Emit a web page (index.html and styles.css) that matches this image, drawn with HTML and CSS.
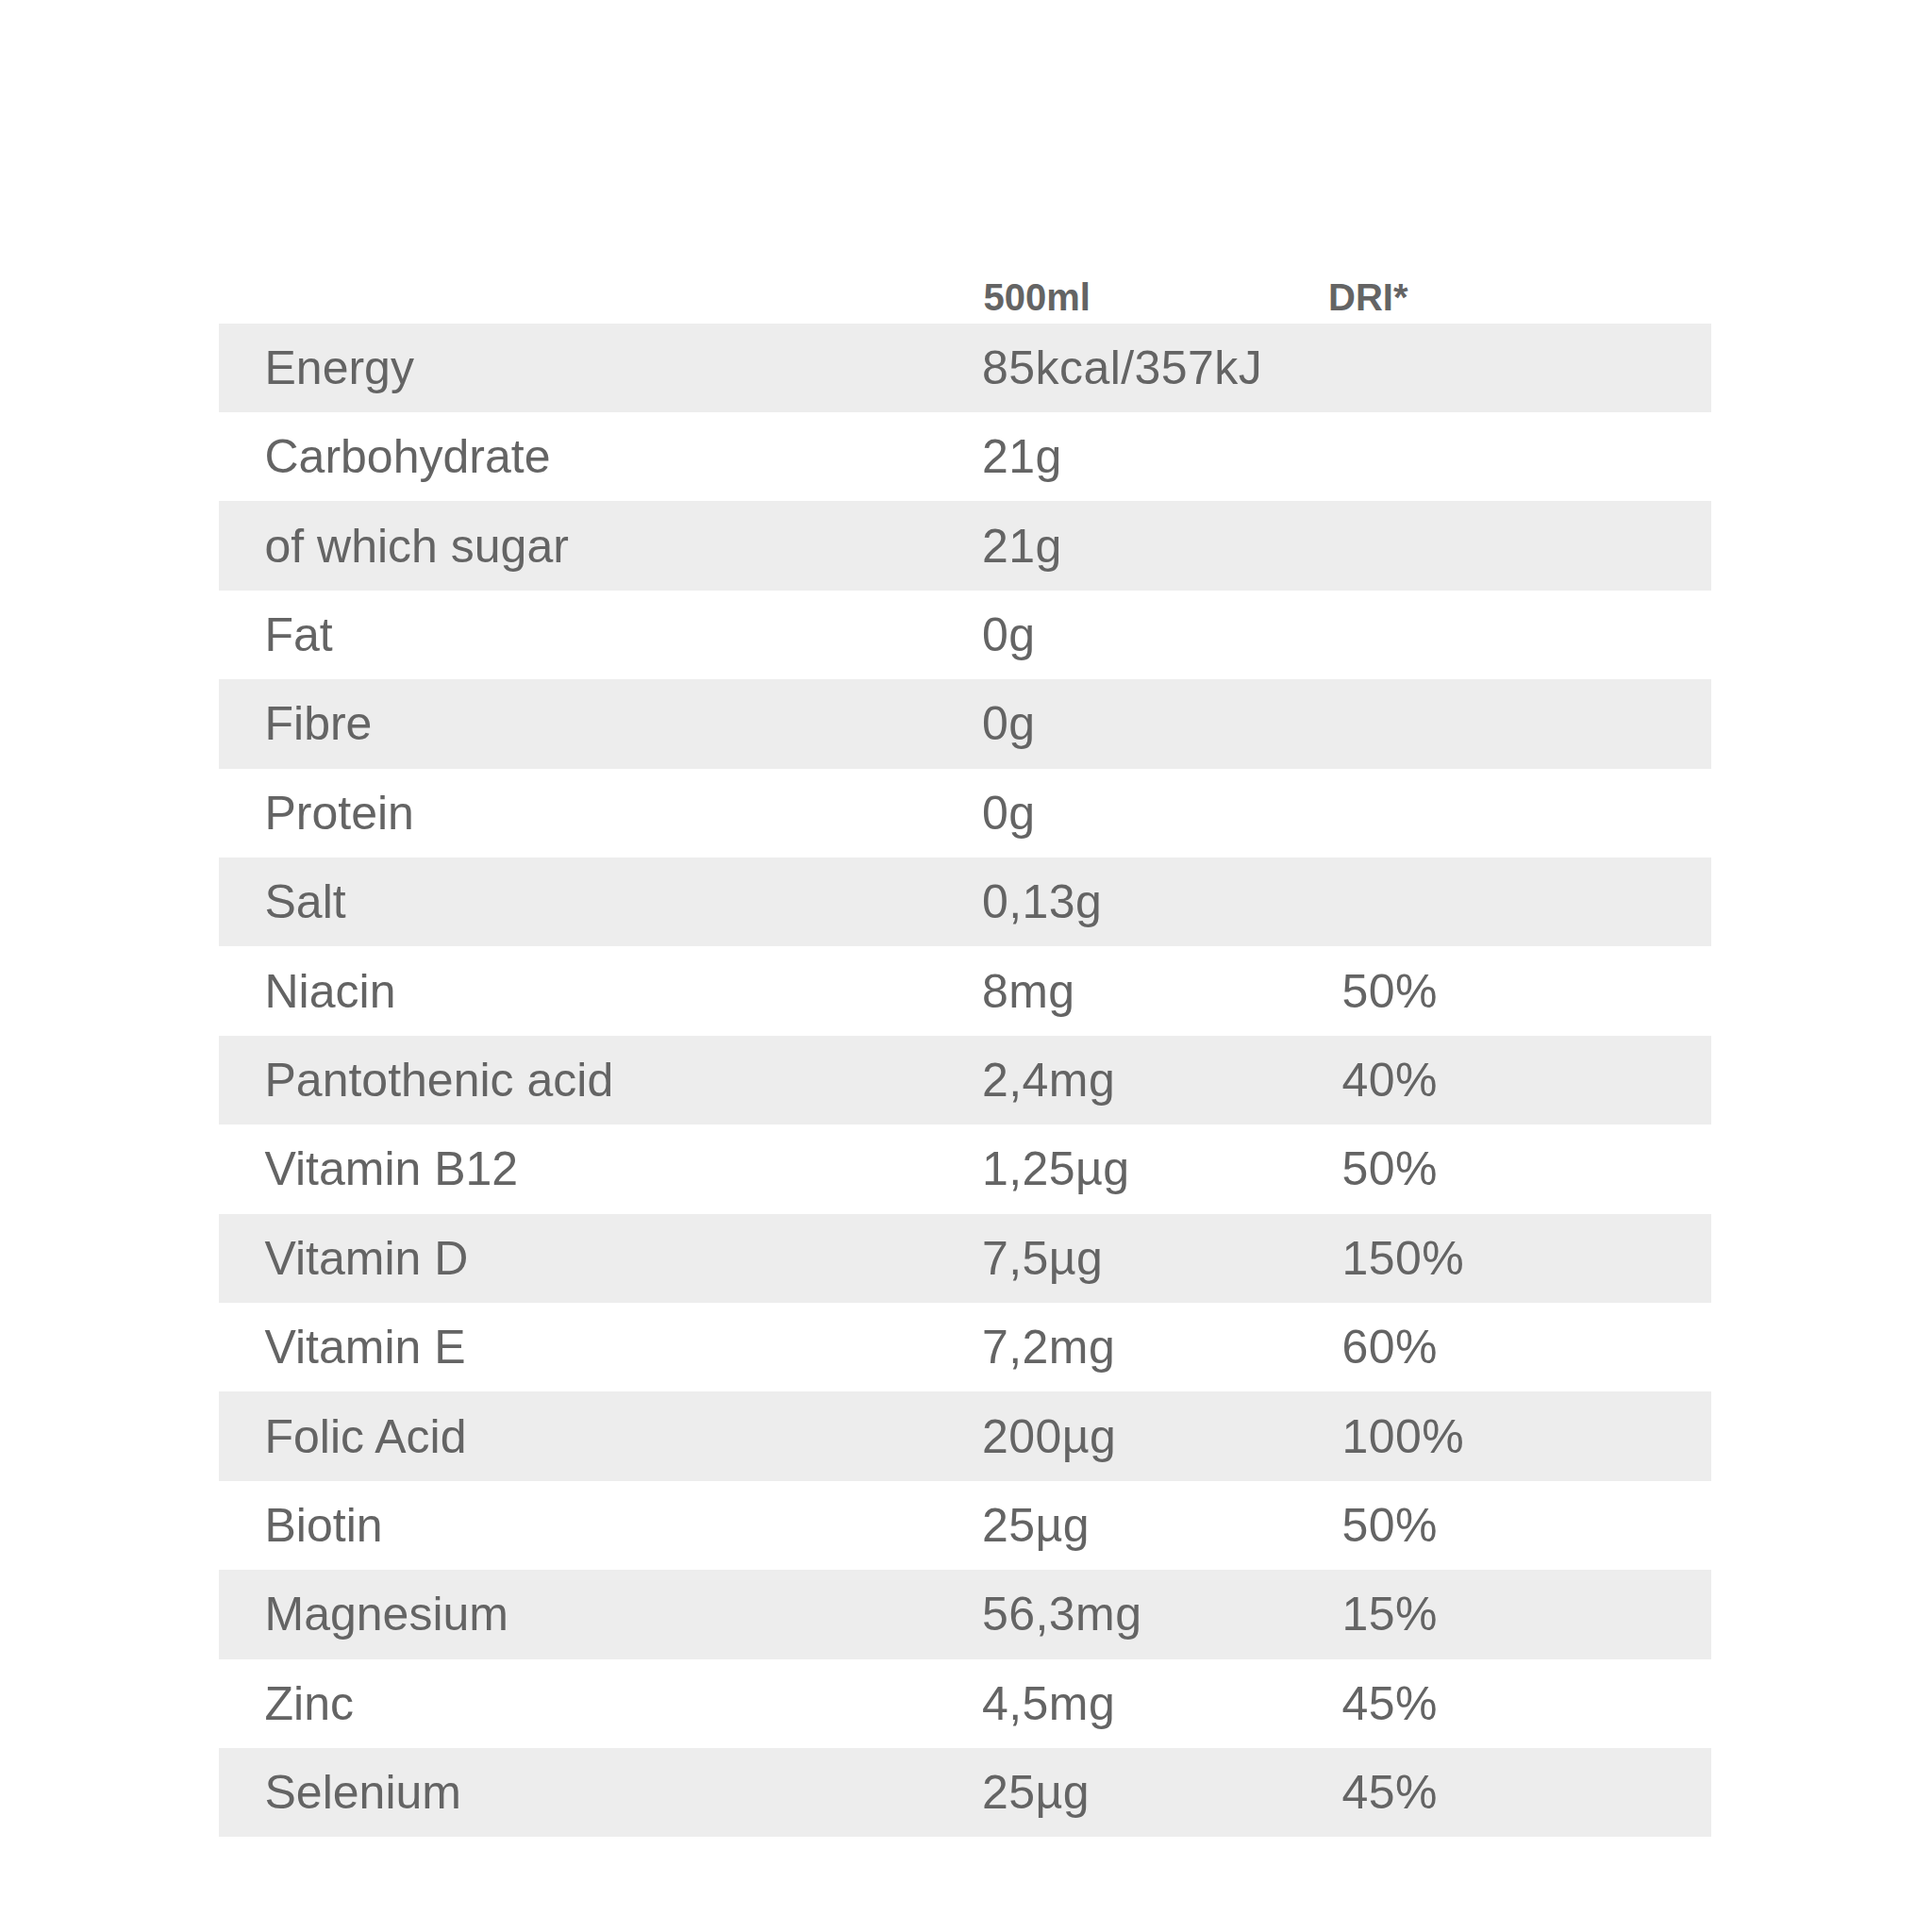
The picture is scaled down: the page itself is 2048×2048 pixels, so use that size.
FILE: index.html
```html
<!DOCTYPE html>
<html lang="en">
<head>
<meta charset="utf-8">
<title>Nutrition</title>
<link rel="stylesheet" href="styles.css">
</head>
<body>
<div class="table">
  <div class="row head">
    <div class="cell name"></div>
    <div class="cell val">500ml</div>
    <div class="cell dri dri-head">DRI*</div>
  </div>
  <div class="row alt"><div class="cell name">Energy</div><div class="cell val">85kcal/357kJ</div><div class="cell dri"></div></div>
  <div class="row"><div class="cell name">Carbohydrate</div><div class="cell val">21g</div><div class="cell dri"></div></div>
  <div class="row alt"><div class="cell name">of which sugar</div><div class="cell val">21g</div><div class="cell dri"></div></div>
  <div class="row"><div class="cell name">Fat</div><div class="cell val">0g</div><div class="cell dri"></div></div>
  <div class="row alt"><div class="cell name">Fibre</div><div class="cell val">0g</div><div class="cell dri"></div></div>
  <div class="row"><div class="cell name">Protein</div><div class="cell val">0g</div><div class="cell dri"></div></div>
  <div class="row alt"><div class="cell name">Salt</div><div class="cell val">0,13g</div><div class="cell dri"></div></div>
  <div class="row"><div class="cell name">Niacin</div><div class="cell val">8mg</div><div class="cell dri">50%</div></div>
  <div class="row alt"><div class="cell name">Pantothenic acid</div><div class="cell val">2,4mg</div><div class="cell dri">40%</div></div>
  <div class="row"><div class="cell name">Vitamin B12</div><div class="cell val">1,25µg</div><div class="cell dri">50%</div></div>
  <div class="row alt"><div class="cell name">Vitamin D</div><div class="cell val">7,5µg</div><div class="cell dri">150%</div></div>
  <div class="row"><div class="cell name">Vitamin E</div><div class="cell val">7,2mg</div><div class="cell dri">60%</div></div>
  <div class="row alt"><div class="cell name">Folic Acid</div><div class="cell val">200µg</div><div class="cell dri">100%</div></div>
  <div class="row"><div class="cell name">Biotin</div><div class="cell val">25µg</div><div class="cell dri">50%</div></div>
  <div class="row alt"><div class="cell name">Magnesium</div><div class="cell val">56,3mg</div><div class="cell dri">15%</div></div>
  <div class="row"><div class="cell name">Zinc</div><div class="cell val">4,5mg</div><div class="cell dri">45%</div></div>
  <div class="row alt"><div class="cell name">Selenium</div><div class="cell val">25µg</div><div class="cell dri">45%</div></div>
</div>
</body>
</html>
```
FILE: styles.css
```css
html, body {
  margin: 0;
  padding: 0;
  background: #ffffff;
}

body {
  font-family: "Liberation Sans", Arial, sans-serif;
  color: #646464;
}

.table {
  width: 1582px;
  margin: 291.5px 0 0 232px;
}

.row {
  display: grid;
  grid-template-columns: 809px 381.5px 1fr;
  align-items: center;
  height: 94.4px;
  font-size: 50px;
  line-height: 56px;
}

.row.alt {
  background: #ededed;
}

.row.head {
  height: 51.2px;
  font-size: 40px;
  line-height: 46px;
  font-weight: bold;
  align-items: start;
}

.cell {
  white-space: nowrap;
}

.cell.name {
  padding-left: 48.5px;
}

.cell.val,
.cell.dri {
  letter-spacing: 0.45px;
}

.head .cell.val {
  padding-left: 1.5px;
  letter-spacing: 0;
}

.head .dri-head {
  margin-left: -14.5px;
  letter-spacing: 0;
}
```
